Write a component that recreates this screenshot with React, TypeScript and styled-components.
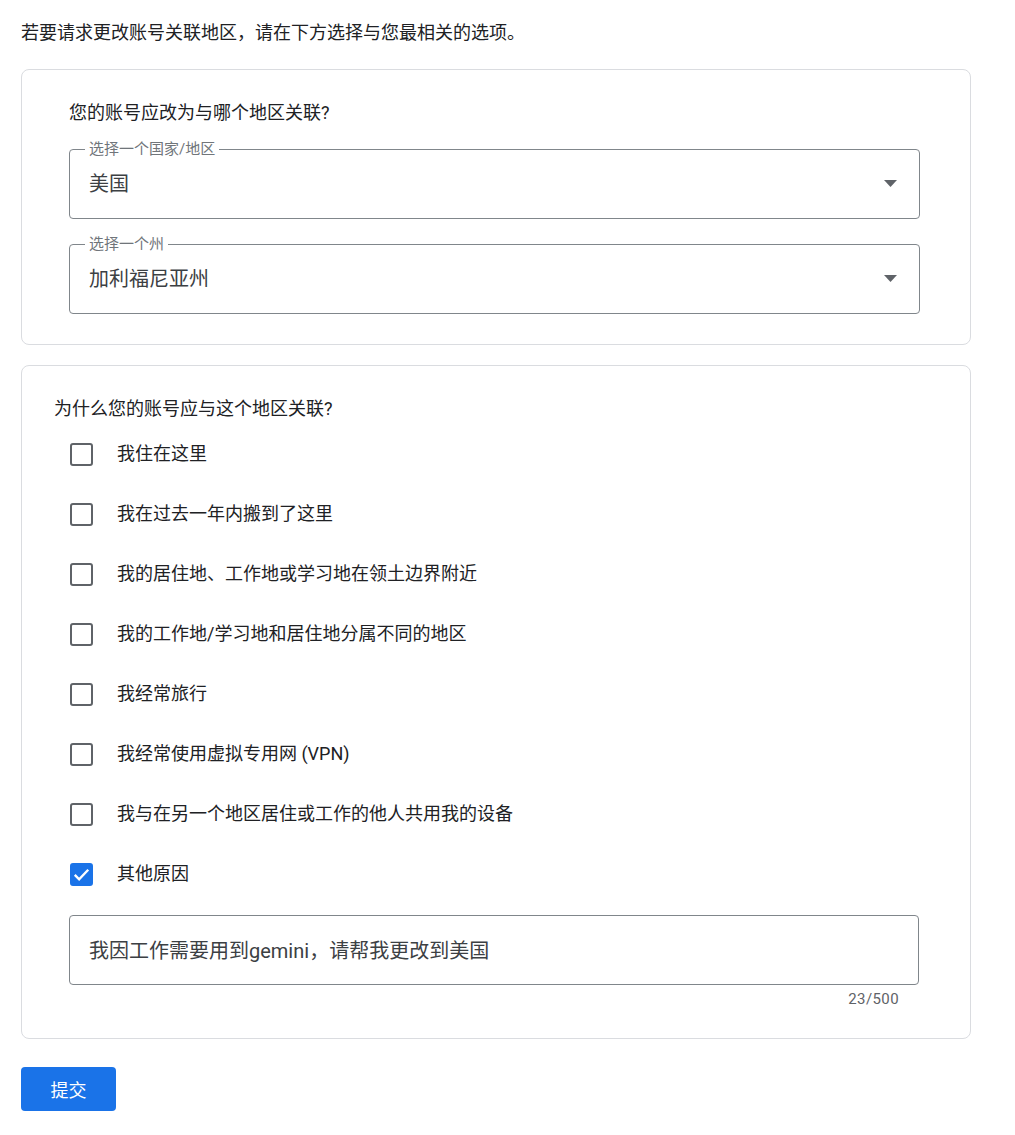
import styled, { createGlobalStyle } from 'styled-components';

const GlobalStyle = createGlobalStyle`
  html, body {
    margin: 0;
    padding: 0;
    background: #fff;
  }
  body {
    font-family: Roboto, "Noto Sans CJK SC", sans-serif;
    color: #202124;
  }
  * { box-sizing: border-box; }
`;

const Page = styled.div`
  padding: 21px 21px 40px;
  width: 992px;
`;

const Intro = styled.p`
  margin: 0 0 24px;
  font-size: 18px;
  line-height: 24px;
  color: #202124;
`;

const Card = styled.section<{ $padLeft: number; $padRight: number }>`
  width: 950px;
  border: 1px solid #dadce0;
  border-radius: 8px;
  padding: 31px ${p => p.$padRight}px 30px ${p => p.$padLeft}px;
  & + & { margin-top: 20px; }
`;

const Question = styled.h2`
  margin: 0;
  font-size: 18px;
  font-weight: 400;
  line-height: 24px;
  color: #202124;
`;

const Field = styled.fieldset<{ $gap: number }>`
  margin: ${p => p.$gap}px 0 0;
  min-width: 0;
  padding: 0 22px 8px 19px;
  border: 1px solid #80868b;
  border-radius: 4px;
`;

const Legend = styled.legend`
  margin-left: -4px;
  padding: 0 4px;
  font-size: 15px;
  line-height: 16px;
  color: #70757a;
`;

const SelectRow = styled.div`
  height: 53px;
  display: flex;
  align-items: center;
  justify-content: space-between;
`;

const SelectValue = styled.span`
  font-size: 20px;
  line-height: 26px;
  color: #3c4043;
`;

const Arrow = styled.svg`
  display: block;
  width: 13px;
  height: 7px;
`;

const Options = styled.div`
  margin-top: 3px;
`;

const OptionRow = styled.label`
  height: 60px;
  padding-left: 16px;
  display: flex;
  align-items: center;
  gap: 24px;
  cursor: pointer;
`;

const Box = styled.span<{ $checked: boolean }>`
  width: 23px;
  height: 23px;
  flex-shrink: 0;
  border-radius: 3px;
  border: 2px solid ${p => (p.$checked ? '#1a73e8' : '#5f6368')};
  background: ${p => (p.$checked ? '#1a73e8' : '#fff')};
  display: flex;
  align-items: center;
  justify-content: center;
`;

const OptionText = styled.span`
  font-size: 18px;
  line-height: 24px;
  color: #202124;
`;

const OtherReason = styled.div`
  padding-left: 15px;
`;

const TextArea = styled.textarea`
  display: block;
  margin-top: 11px;
  width: 850px;
  height: 70px;
  padding: 22px 19px;
  border: 1px solid #80868b;
  border-radius: 4px;
  resize: none;
  overflow: hidden;
  font-family: Roboto, "Noto Sans CJK SC", sans-serif;
  font-size: 20px;
  line-height: 26px;
  color: #3c4043;
  outline: none;
`;

const Counter = styled.div`
  width: 850px;
  margin-top: 5px;
  padding-right: 20px;
  text-align: right;
  font-size: 15px;
  line-height: 18px;
  color: #5f6368;
  letter-spacing: 0.4px;
`;

const Submit = styled.button`
  margin-top: 28px;
  width: 95px;
  height: 44px;
  border: none;
  border-radius: 4px;
  background: #1a73e8;
  color: #fff;
  font-family: Roboto, "Noto Sans CJK SC", sans-serif;
  font-size: 18px;
  cursor: pointer;
`;

const reasons = [
  { text: '我住在这里', checked: false },
  { text: '我在过去一年内搬到了这里', checked: false },
  { text: '我的居住地、工作地或学习地在领土边界附近', checked: false },
  { text: '我的工作地/学习地和居住地分属不同的地区', checked: false },
  { text: '我经常旅行', checked: false },
  { text: '我经常使用虚拟专用网 (VPN)', checked: false },
  { text: '我与在另一个地区居住或工作的他人共用我的设备', checked: false },
  { text: '其他原因', checked: true },
];

function DropArrow() {
  return (
    <Arrow viewBox="0 0 13 7">
      <path d="M0 0 L13 0 L6.5 7 Z" fill="#5f6368" />
    </Arrow>
  );
}

function Select({ label, value, gap }: { label: string; value: string; gap: number }) {
  return (
    <Field $gap={gap}>
      <Legend>{label}</Legend>
      <SelectRow>
        <SelectValue>{value}</SelectValue>
        <DropArrow />
      </SelectRow>
    </Field>
  );
}

function Checkbox({ checked }: { checked: boolean }) {
  return (
    <Box $checked={checked}>
      {checked && (
        <svg width="19" height="19" viewBox="0 0 24 24">
          <path d="M3.5 12.5 L9 18 L20.5 6" fill="none" stroke="#fff" strokeWidth="3" />
        </svg>
      )}
    </Box>
  );
}

export default function App() {
  const note = '我因工作需要用到gemini，请帮我更改到美国';
  return (
    <Page>
      <GlobalStyle />
      <Intro>若要请求更改账号关联地区，请在下方选择与您最相关的选项。</Intro>

      <Card $padLeft={47} $padRight={50}>
        <Question>您的账号应改为与哪个地区关联?</Question>
        <Select label="选择一个国家/地区" value="美国" gap={16} />
        <Select label="选择一个州" value="加利福尼亚州" gap={17} />
      </Card>

      <Card $padLeft={32} $padRight={50}>
        <Question>为什么您的账号应与这个地区关联?</Question>
        <Options>
          {reasons.map(r => (
            <OptionRow key={r.text}>
              <Checkbox checked={r.checked} />
              <OptionText>{r.text}</OptionText>
            </OptionRow>
          ))}
        </Options>
        <OtherReason>
          <TextArea readOnly value={note} />
          <Counter>{note.length}/500</Counter>
        </OtherReason>
      </Card>

      <Submit>提交</Submit>
    </Page>
  );
}
